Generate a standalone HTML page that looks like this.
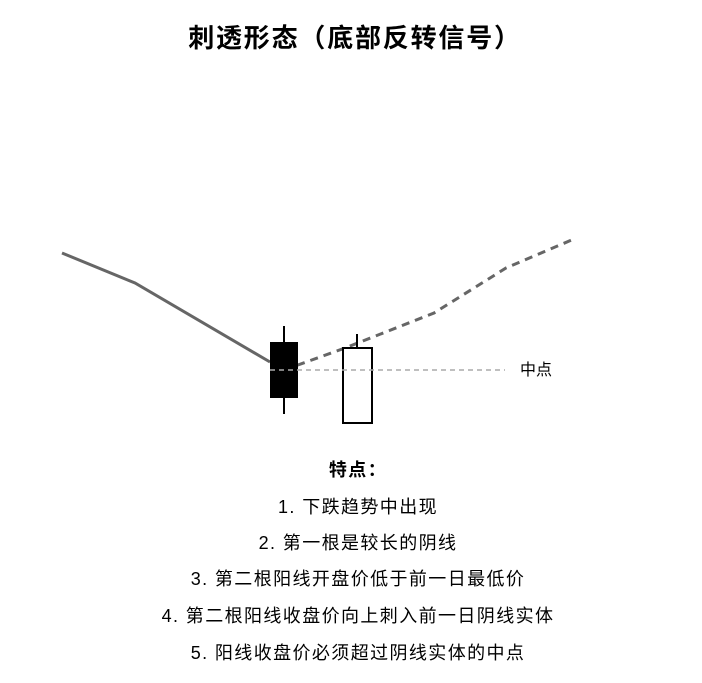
<!DOCTYPE html>
<html><head><meta charset="utf-8"><style>
body{margin:0;width:702px;height:683px;background:#fff;font-family:"Liberation Sans","Noto Sans CJK SC",sans-serif;color:#000;position:relative;overflow:hidden}
.t{position:absolute;left:0;width:702px;text-align:center;white-space:nowrap}
.l{font-size:18px;letter-spacing:1.4px;left:7px}
</style></head><body>
<div class="t" style="top:18px;font-size:26px;font-weight:bold;letter-spacing:1.8px;left:4px">刺透形态（底部反转信号）</div>
<svg width="702" height="683" style="position:absolute;left:0;top:0">
<polyline points="62,253 135,283 270,362" fill="none" stroke="#666" stroke-width="3"/>
<polyline points="284,370 345,348 434,313 506,268 574,239" fill="none" stroke="#666" stroke-width="3" stroke-dasharray="8,6"/>
<line x1="284" y1="326" x2="284" y2="414" stroke="#000" stroke-width="2"/>
<rect x="270" y="342" width="28" height="56" fill="#000"/>
<line x1="357" y1="334" x2="357" y2="348" stroke="#000" stroke-width="2"/>
<rect x="343" y="348" width="29" height="75" fill="#fff" stroke="#000" stroke-width="2"/>
<line x1="270" y1="370" x2="505" y2="370" stroke="#aaa" stroke-width="1.5" stroke-dasharray="5,4"/>
<text x="520" y="375" font-size="16" font-family="Liberation Sans,Noto Sans CJK SC,sans-serif">中点</text>
</svg>
<div class="t l" style="top:456px;font-weight:bold">特点：</div>
<div class="t l" style="top:493px">1. 下跌趋势中出现</div>
<div class="t l" style="top:529px">2. 第一根是较长的阴线</div>
<div class="t l" style="top:565px">3. 第二根阳线开盘价低于前一日最低价</div>
<div class="t l" style="top:602px">4. 第二根阳线收盘价向上刺入前一日阴线实体</div>
<div class="t l" style="top:639px">5. 阳线收盘价必须超过阴线实体的中点</div>
</body></html>
